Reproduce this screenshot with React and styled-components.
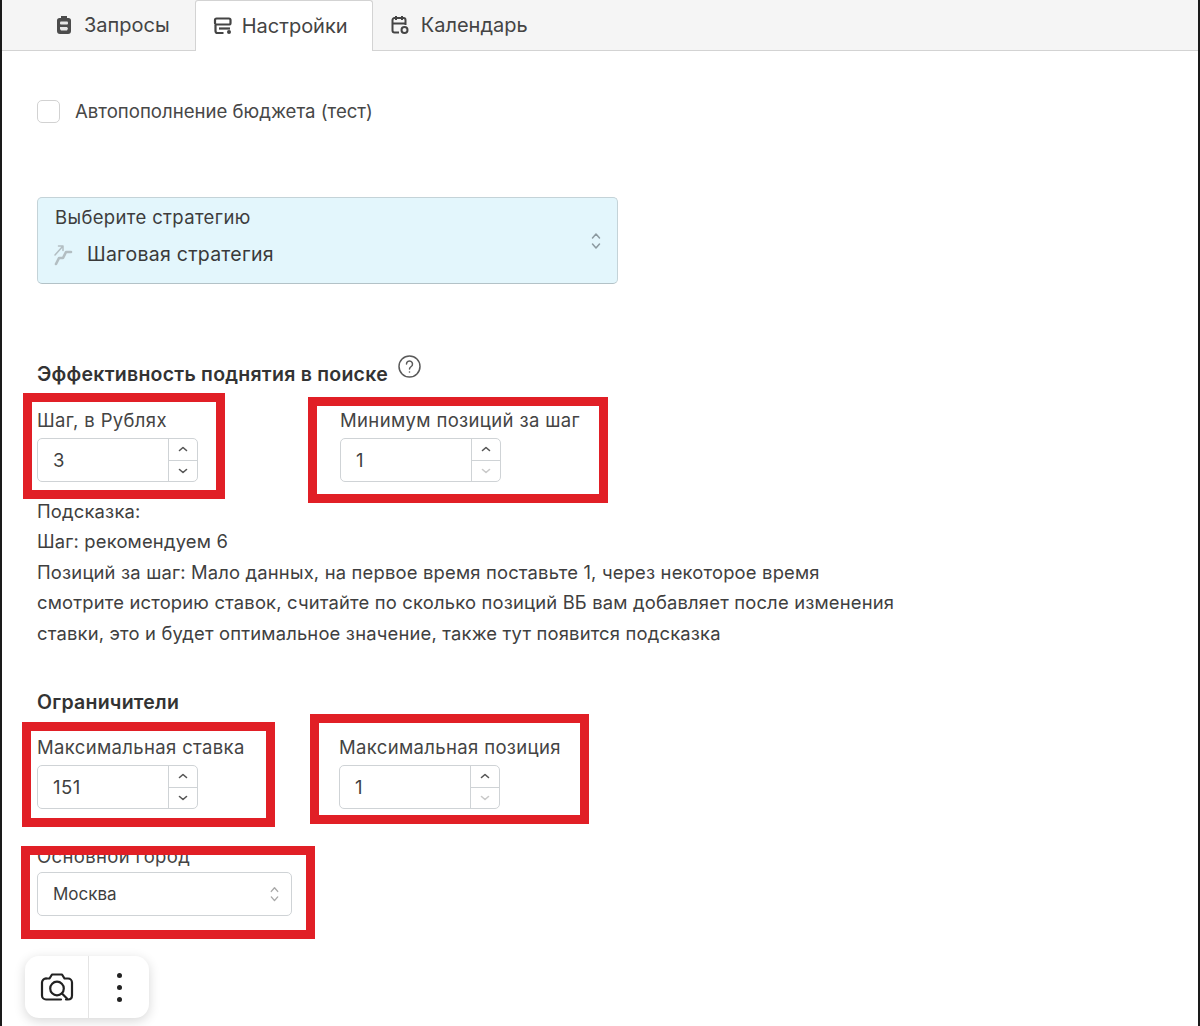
import React from "react";
import styled, { createGlobalStyle } from "styled-components";

const Global = createGlobalStyle`
  html, body { margin: 0; padding: 0; background: #fff; }
  body { font-family: Inter, "Noto Sans", sans-serif; color: #3a3a3a; }
  * { box-sizing: border-box; }
`;

const Page = styled.div`
  width: 1200px;
  height: 1026px;
  overflow: hidden;
  position: relative;
  background: #fff;
  border-left: 2px solid #1a1a1a;
  border-right: 2px solid #1a1a1a;
`;

const TabBar = styled.div`
  height: 51px;
  display: flex;
  padding-left: 53px;
  background: #f5f5f5;
  border-bottom: 1px solid #d3d3d3;
`;

const Tab = styled.div`
  display: flex;
  align-items: center;
  gap: 11px;
  height: 50px;
  padding: 0 25px 0 ${(p) => p.$pl || 0}px;
  font-size: 20px;
  color: #444;
  white-space: nowrap;
  svg { flex: none; }
`;

const ActiveTab = styled(Tab)`
  width: 178px;
  height: 51px;
  gap: 9px;
  padding: 0 0 0 17px;
  background: #fff;
  border: 1px solid #d3d3d3;
  border-bottom: none;
  border-radius: 3px 3px 0 0;
`;

const Content = styled.div`
  padding: 49px 0 0 35px;
  display: flex;
  flex-direction: column;
`;

const CheckRow = styled.label`
  display: flex;
  align-items: center;
  gap: 15px;
  height: 22px;
  font-size: 18.6px;
  color: #474747;
`;

const CheckBox = styled.span`
  width: 23px;
  height: 23px;
  border: 1px solid #d2d2d2;
  border-radius: 5px;
  background: #fff;
`;

const StrategySelect = styled.div`
  margin-top: 75px;
  width: 581px;
  height: 87px;
  padding: 0 15px 0 17px;
  background: #e3f6fc;
  border: 1px solid #c4d3d8;
  border-bottom-color: #b3c2c7;
  border-radius: 5px;
  display: flex;
  align-items: center;
  justify-content: space-between;
`;

const StrategyText = styled.div`
  display: flex;
  flex-direction: column;
  gap: 14px;
  align-self: flex-start;
  margin-top: 9px;
`;

const SmallLabel = styled.div`
  font-size: 18.5px;
  letter-spacing: 0.35px;
  line-height: 20px;
  color: #3d3d3d;
  white-space: nowrap;
`;

const StrategyValue = styled.div`
  display: flex;
  align-items: center;
  gap: 11px;
  margin-left: -3px;
  font-size: 19.5px;
  letter-spacing: 0.25px;
  line-height: 24px;
  color: #3a3a3a;
`;

const SectionTitle = styled.div`
  display: flex;
  align-items: flex-start;
  font-size: 19.5px;
  letter-spacing: 0.25px;
  font-weight: 600;
  line-height: 24px;
  color: #333;
  white-space: nowrap;
  margin-top: ${(p) => p.$top}px;
  svg { margin: -8px 0 0 9px; }
`;

const FieldRow = styled.div`
  display: flex;
  margin-top: ${(p) => p.$top}px;
`;

const Field = styled.div`
  position: relative;
  width: ${(p) => p.$width}px;
`;

const FieldLabel = styled(SmallLabel)`
  height: ${(p) => p.$h}px;
  color: #444;
`;

const NumberInput = styled.div`
  width: 161px;
  height: 44px;
  display: flex;
  background: #fff;
  border: 1px solid #cfd3d6;
  border-radius: 5px;
`;

const NumberValue = styled.div`
  flex: 1;
  padding-left: 15px;
  display: flex;
  align-items: center;
  font-size: 18.5px;
  letter-spacing: 0.5px;
  color: #3f3f3f;
`;

const Stepper = styled.div`
  width: 29px;
  display: flex;
  flex-direction: column;
  border-left: 1px solid #cfd3d6;
`;

const StepButton = styled.div`
  flex: 1;
  display: flex;
  align-items: center;
  justify-content: center;
  color: ${(p) => (p.$disabled ? "#c9c9c9" : "#555")};
  & + & { border-top: 1px solid #cfd3d6; }
`;

const Hints = styled.div`
  margin-top: 14px;
  font-size: 18.4px;
  letter-spacing: 0.18px;
  line-height: 30.4px;
  white-space: nowrap;
  color: #3f3f3f;
`;

const CitySelect = styled.div`
  width: 255px;
  height: 44px;
  padding: 0 11px 0 15px;
  display: flex;
  align-items: center;
  justify-content: space-between;
  background: #fff;
  border: 1px solid #cfd3d6;
  border-radius: 5px;
  font-size: 17px;
  color: #3f3f3f;
`;

const Highlight = styled.div`
  position: absolute;
  top: ${(p) => p.$t}px;
  left: ${(p) => p.$l}px;
  width: ${(p) => p.$w}px;
  height: ${(p) => p.$h}px;
  border: 9px solid #e11f26;
  pointer-events: none;
`;

const FloatBar = styled.div`
  position: absolute;
  left: 23px;
  top: 956px;
  width: 124px;
  height: 62px;
  display: flex;
  background: #fff;
  border-radius: 14px;
  box-shadow: 0 3px 12px rgba(0, 0, 0, 0.16);
`;

const FloatButton = styled.div`
  flex: ${(p) => (p.$wide ? "0 0 63px" : "1")};
  display: flex;
  align-items: center;
  justify-content: center;
  color: #222;
  & + & { border-left: 1px solid #e4e4e4; }
`;

const Dots = styled.div`
  display: flex;
  flex-direction: column;
  gap: 7px;
  span { width: 5px; height: 5px; border-radius: 50%; background: #222; }
`;

const Up = () => (
  <svg width="12" height="8" viewBox="0 0 12 8" fill="none" stroke="currentColor" strokeWidth="1.6" strokeLinecap="round" strokeLinejoin="round">
    <path d="M2.5 5.5 6 2.5l3.5 3" />
  </svg>
);
const Down = () => (
  <svg width="12" height="8" viewBox="0 0 12 8" fill="none" stroke="currentColor" strokeWidth="1.6" strokeLinecap="round" strokeLinejoin="round">
    <path d="M2.5 2.5 6 5.5l3.5-3" />
  </svg>
);
const UpDown = ({ color, size = 12 }) => (
  <svg width={size} height={(size * 20) / 12} viewBox="0 0 12 20" fill="none" stroke={color} strokeWidth="1.5" strokeLinecap="round" strokeLinejoin="round">
    <path d="M2.5 7 6 3l3.5 4M2.5 13 6 17l3.5-4" />
  </svg>
);

const ClipboardIcon = () => (
  <svg width="18" height="20" viewBox="0 0 18 20" fill="#4c4c4c">
    <path d="M6 1h6v2h1.500A2.500 2.500 0 0 1 16 5.500V16a3 3 0 0 1-3 3H5a3 3 0 0 1-3-3V5.500A2.500 2.500 0 0 1 4.500 3H6z" />
    <rect x="5" y="6.500" width="8" height="3" rx="1" fill="#e6e6e6" />
    <path d="M5 12h7l1 1.500-1 2H6l-1-1.500z" fill="#e6e6e6" />
  </svg>
);
const SettingsIcon = () => (
  <svg width="20" height="20" viewBox="0 0 20 20" fill="none" stroke="#444" strokeWidth="2.2" strokeLinejoin="round">
    <rect x="2" y="2.500" width="15.500" height="6" rx="1.600" />
    <path d="M2.500 9v6a2 2 0 0 0 2 2h6" />
    <path d="M6 12.500h11" />
    <circle cx="16" cy="16" r="2" fill="#444" stroke="none" />
  </svg>
);
const CalendarIcon = () => (
  <svg width="20" height="20" viewBox="0 0 20 20" fill="none" stroke="#444" strokeWidth="2" strokeLinejoin="round">
    <path d="M9 17.500H4.500a2 2 0 0 1-2-2V5a2 2 0 0 1 2-2h9a2 2 0 0 1 2 2v5" />
    <path d="M6 1v4M12 1v4M2.500 8.500h13" />
    <circle cx="14.500" cy="15" r="3" />
  </svg>
);
const StairsIcon = () => (
  <svg width="24" height="26" viewBox="0 0 24 26" fill="none" stroke="#b3bec2" strokeLinecap="round" strokeLinejoin="round">
    <path d="M4 23l3-6h4l3-6h5" strokeWidth="2.600" />
    <path d="M3 14l8-9M11 5H6.500M11 5v4.500" strokeWidth="1.500" />
  </svg>
);
const HelpIcon = () => (
  <svg width="25" height="25" viewBox="0 0 25 25" fill="none" stroke="#5a5a5a" strokeWidth="1.500" strokeLinecap="round">
    <circle cx="12.500" cy="12.500" r="10.500" />
    <path d="M9.500 10a3 3 0 1 1 4.700 2.500c-1 .7-1.700 1.300-1.700 2.500" />
    <circle cx="12.500" cy="18" r="0.800" fill="#5a5a5a" stroke="none" />
  </svg>
);
const CameraSearchIcon = () => (
  <svg width="34" height="32" viewBox="0 0 34 32" fill="none" stroke="#222" strokeWidth="2.200" strokeLinecap="round" strokeLinejoin="round">
    <path d="M6 7.500h3.500L12 3.500h10l2.500 4H28a4 4 0 0 1 4 4v13c0 2.500-1.500 4-4 4h-2" />
    <path d="M21 28.500H6a4 4 0 0 1-4-4v-13a4 4 0 0 1 4-4" />
    <circle cx="17" cy="17.500" r="6.800" />
    <path d="M22 22.500l5 5" />
  </svg>
);

const NumberField = ({ value, lowDisabled }) => (
  <NumberInput>
    <NumberValue>{value}</NumberValue>
    <Stepper>
      <StepButton><Up /></StepButton>
      <StepButton $disabled={lowDisabled}><Down /></StepButton>
    </Stepper>
  </NumberInput>
);

export default function App() {
  return (
    <Page>
      <Global />
      <TabBar>
        <Tab><ClipboardIcon />Запросы</Tab>
        <ActiveTab><SettingsIcon />Настройки</ActiveTab>
        <Tab $pl={17}><CalendarIcon />Календарь</Tab>
      </TabBar>
      <Content>
        <CheckRow><CheckBox />Автопополнение бюджета (тест)</CheckRow>

        <StrategySelect>
          <StrategyText>
            <SmallLabel>Выберите стратегию</SmallLabel>
            <StrategyValue><StairsIcon />Шаговая стратегия</StrategyValue>
          </StrategyText>
          <UpDown color="#8c9aa0" />
        </StrategySelect>

        <SectionTitle $top={78}>Эффективность поднятия в поиске<HelpIcon /></SectionTitle>

        <FieldRow $top={24}>
          <Field $width={303}>
            <FieldLabel $h={28}>Шаг, в Рублях</FieldLabel>
            <NumberField value="3" />
            <Highlight $t={-17} $l={-14} $w={202} $h={106} />
          </Field>
          <Field $width={300}>
            <FieldLabel $h={28}>Минимум позиций за шаг</FieldLabel>
            <NumberField value="1" lowDisabled />
            <Highlight $t={-13} $l={-32} $w={300} $h={106} />
          </Field>
        </FieldRow>

        <Hints>
          Подсказка:<br />
          Шаг: рекомендуем 6<br />
          Позиций за шаг: Мало данных, на первое время поставьте 1, через некоторое время<br />
          смотрите историю ставок, считайте по сколько позиций ВБ вам добавляет после изменения<br />
          ставки, это и будет оптимальное значение, также тут появится подсказка
        </Hints>

        <SectionTitle $top={42}>Ограничители</SectionTitle>

        <FieldRow $top={23}>
          <Field $width={302}>
            <FieldLabel $h={28}>Максимальная ставка</FieldLabel>
            <NumberField value="151" />
            <Highlight $t={-15} $l={-15} $w={253} $h={105} />
          </Field>
          <Field $width={280}>
            <FieldLabel $h={28}>Максимальная позиция</FieldLabel>
            <NumberField value="1" lowDisabled />
            <Highlight $t={-23} $l={-29} $w={279} $h={110} />
          </Field>
        </FieldRow>

        <FieldRow $top={37}>
          <Field $width={300}>
            <FieldLabel $h={26}>Основной город</FieldLabel>
            <CitySelect>Москва<UpDown color="#a8a8a8" size={11} /></CitySelect>
            <Highlight $t={0} $l={-16} $w={294} $h={93} />
          </Field>
        </FieldRow>
      </Content>
      <FloatBar>
        <FloatButton $wide><CameraSearchIcon /></FloatButton>
        <FloatButton><Dots><span /><span /><span /></Dots></FloatButton>
      </FloatBar>
    </Page>
  );
}
